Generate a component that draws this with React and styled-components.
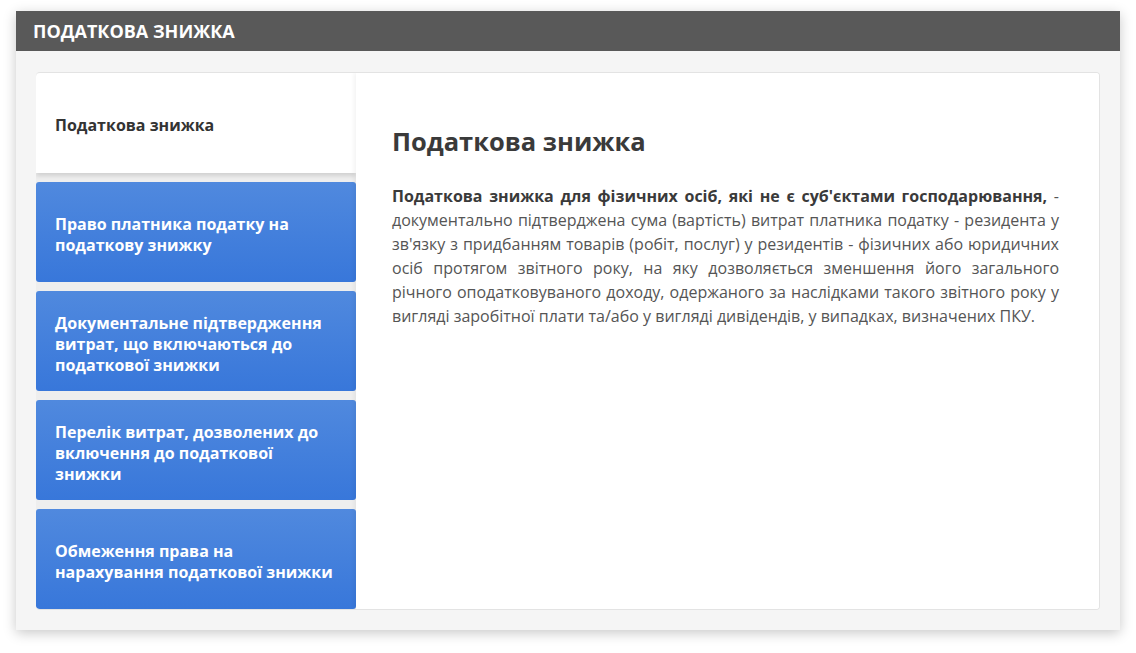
import React, { useState } from 'react';
import styled, { createGlobalStyle } from 'styled-components';

const GlobalStyle = createGlobalStyle`
  body {
    margin: 0;
    background: #ffffff;
    font-family: "Open Sans", "Noto Sans", sans-serif;
  }
`;

const Page = styled.div`
  padding: 11px 16px 22px 16px;
`;

const Panel = styled.div`
  background-color: #f5f5f5;
  box-shadow: 0 3px 12px rgba(0, 0, 0, 0.22);
`;

const Header = styled.div`
  height: 40px;
  display: flex;
  align-items: center;
  padding: 0 17px;
  background-color: #595959;
  color: #ffffff;
  font-size: 18px;
  font-weight: 700;
  text-transform: uppercase;
`;

const Body = styled.div`
  padding: 21px 20px 20px 20px;
`;

const Card = styled.div`
  display: flex;
  background-color: #ffffff;
  border: 1px solid #e3e3e3;
  border-left: none;
  border-radius: 4px;
  overflow: hidden;
`;

const TabList = styled.div`
  width: 320px;
  flex-shrink: 0;
  display: flex;
  flex-direction: column;
  gap: 9px;
  background-color: #eeeeee;
`;

const Tab = styled.button`
  height: 100px;
  display: flex;
  align-items: center;
  padding: ${(p) => (p.$active ? '4px' : '6px')} 20px 0 19px;
  border: none;
  border-radius: ${(p) => (p.$active ? '4px 0 0 0' : '3px')};
  text-align: left;
  font-family: inherit;
  font-weight: 700;
  font-size: 16px;
  line-height: 21px;
  cursor: pointer;
  color: ${(p) => (p.$active ? '#333333' : '#ffffff')};
  background: ${(p) =>
    p.$active ? '#ffffff' : 'linear-gradient(to bottom, #5089de, #3877da)'};
  box-shadow: ${(p) => (p.$active ? '0 3px 4px rgba(0,0,0,0.12)' : 'none')};
`;

const Content = styled.div`
  flex: 1;
  padding: 51px 40px 30px 36px;
  background-color: #ffffff;
  box-shadow: -2px 0 4px rgba(0, 0, 0, 0.05);
  color: #555555;
`;

const Title = styled.h2`
  margin: 0 0 26px 0;
  font-size: 25.5px;
  line-height: 34px;
  font-weight: 700;
  color: #3a3a3a;
`;

const Text = styled.p`
  margin: 0;
  font-size: 16px;
  line-height: 24px;
  text-align: justify;

  strong {
    color: #3a3a3a;
  }
`;

const tabs = [
  'Податкова знижка',
  'Право платника податку на податкову знижку',
  'Документальне підтвердження витрат, що включаються до податкової знижки',
  'Перелік витрат, дозволених до включення до податкової знижки',
  'Обмеження права на нарахування податкової знижки',
];

function App() {
  const [active, setActive] = useState(0);

  return (
    <Page>
      <GlobalStyle />
      <Panel>
        <Header>Податкова знижка</Header>
        <Body>
          <Card>
            <TabList>
              {tabs.map((t, i) => (
                <Tab key={t} $active={i === active} onClick={() => setActive(i)}>
                  {t}
                </Tab>
              ))}
            </TabList>
            <Content>
              <Title>Податкова знижка</Title>
              <Text>
                <strong>Податкова знижка для фізичних осіб, які не є суб'єктами господарювання,</strong>{' '}
                - документально підтверджена сума (вартість) витрат платника податку - резидента у
                зв'язку з придбанням товарів (робіт, послуг) у резидентів - фізичних або юридичних
                осіб протягом звітного року, на яку дозволяється зменшення його загального річного
                оподатковуваного доходу, одержаного за наслідками такого звітного року у вигляді
                заробітної плати та/або у вигляді дивідендів, у випадках, визначених ПКУ.
              </Text>
            </Content>
          </Card>
        </Body>
      </Panel>
    </Page>
  );
}

export default App;
